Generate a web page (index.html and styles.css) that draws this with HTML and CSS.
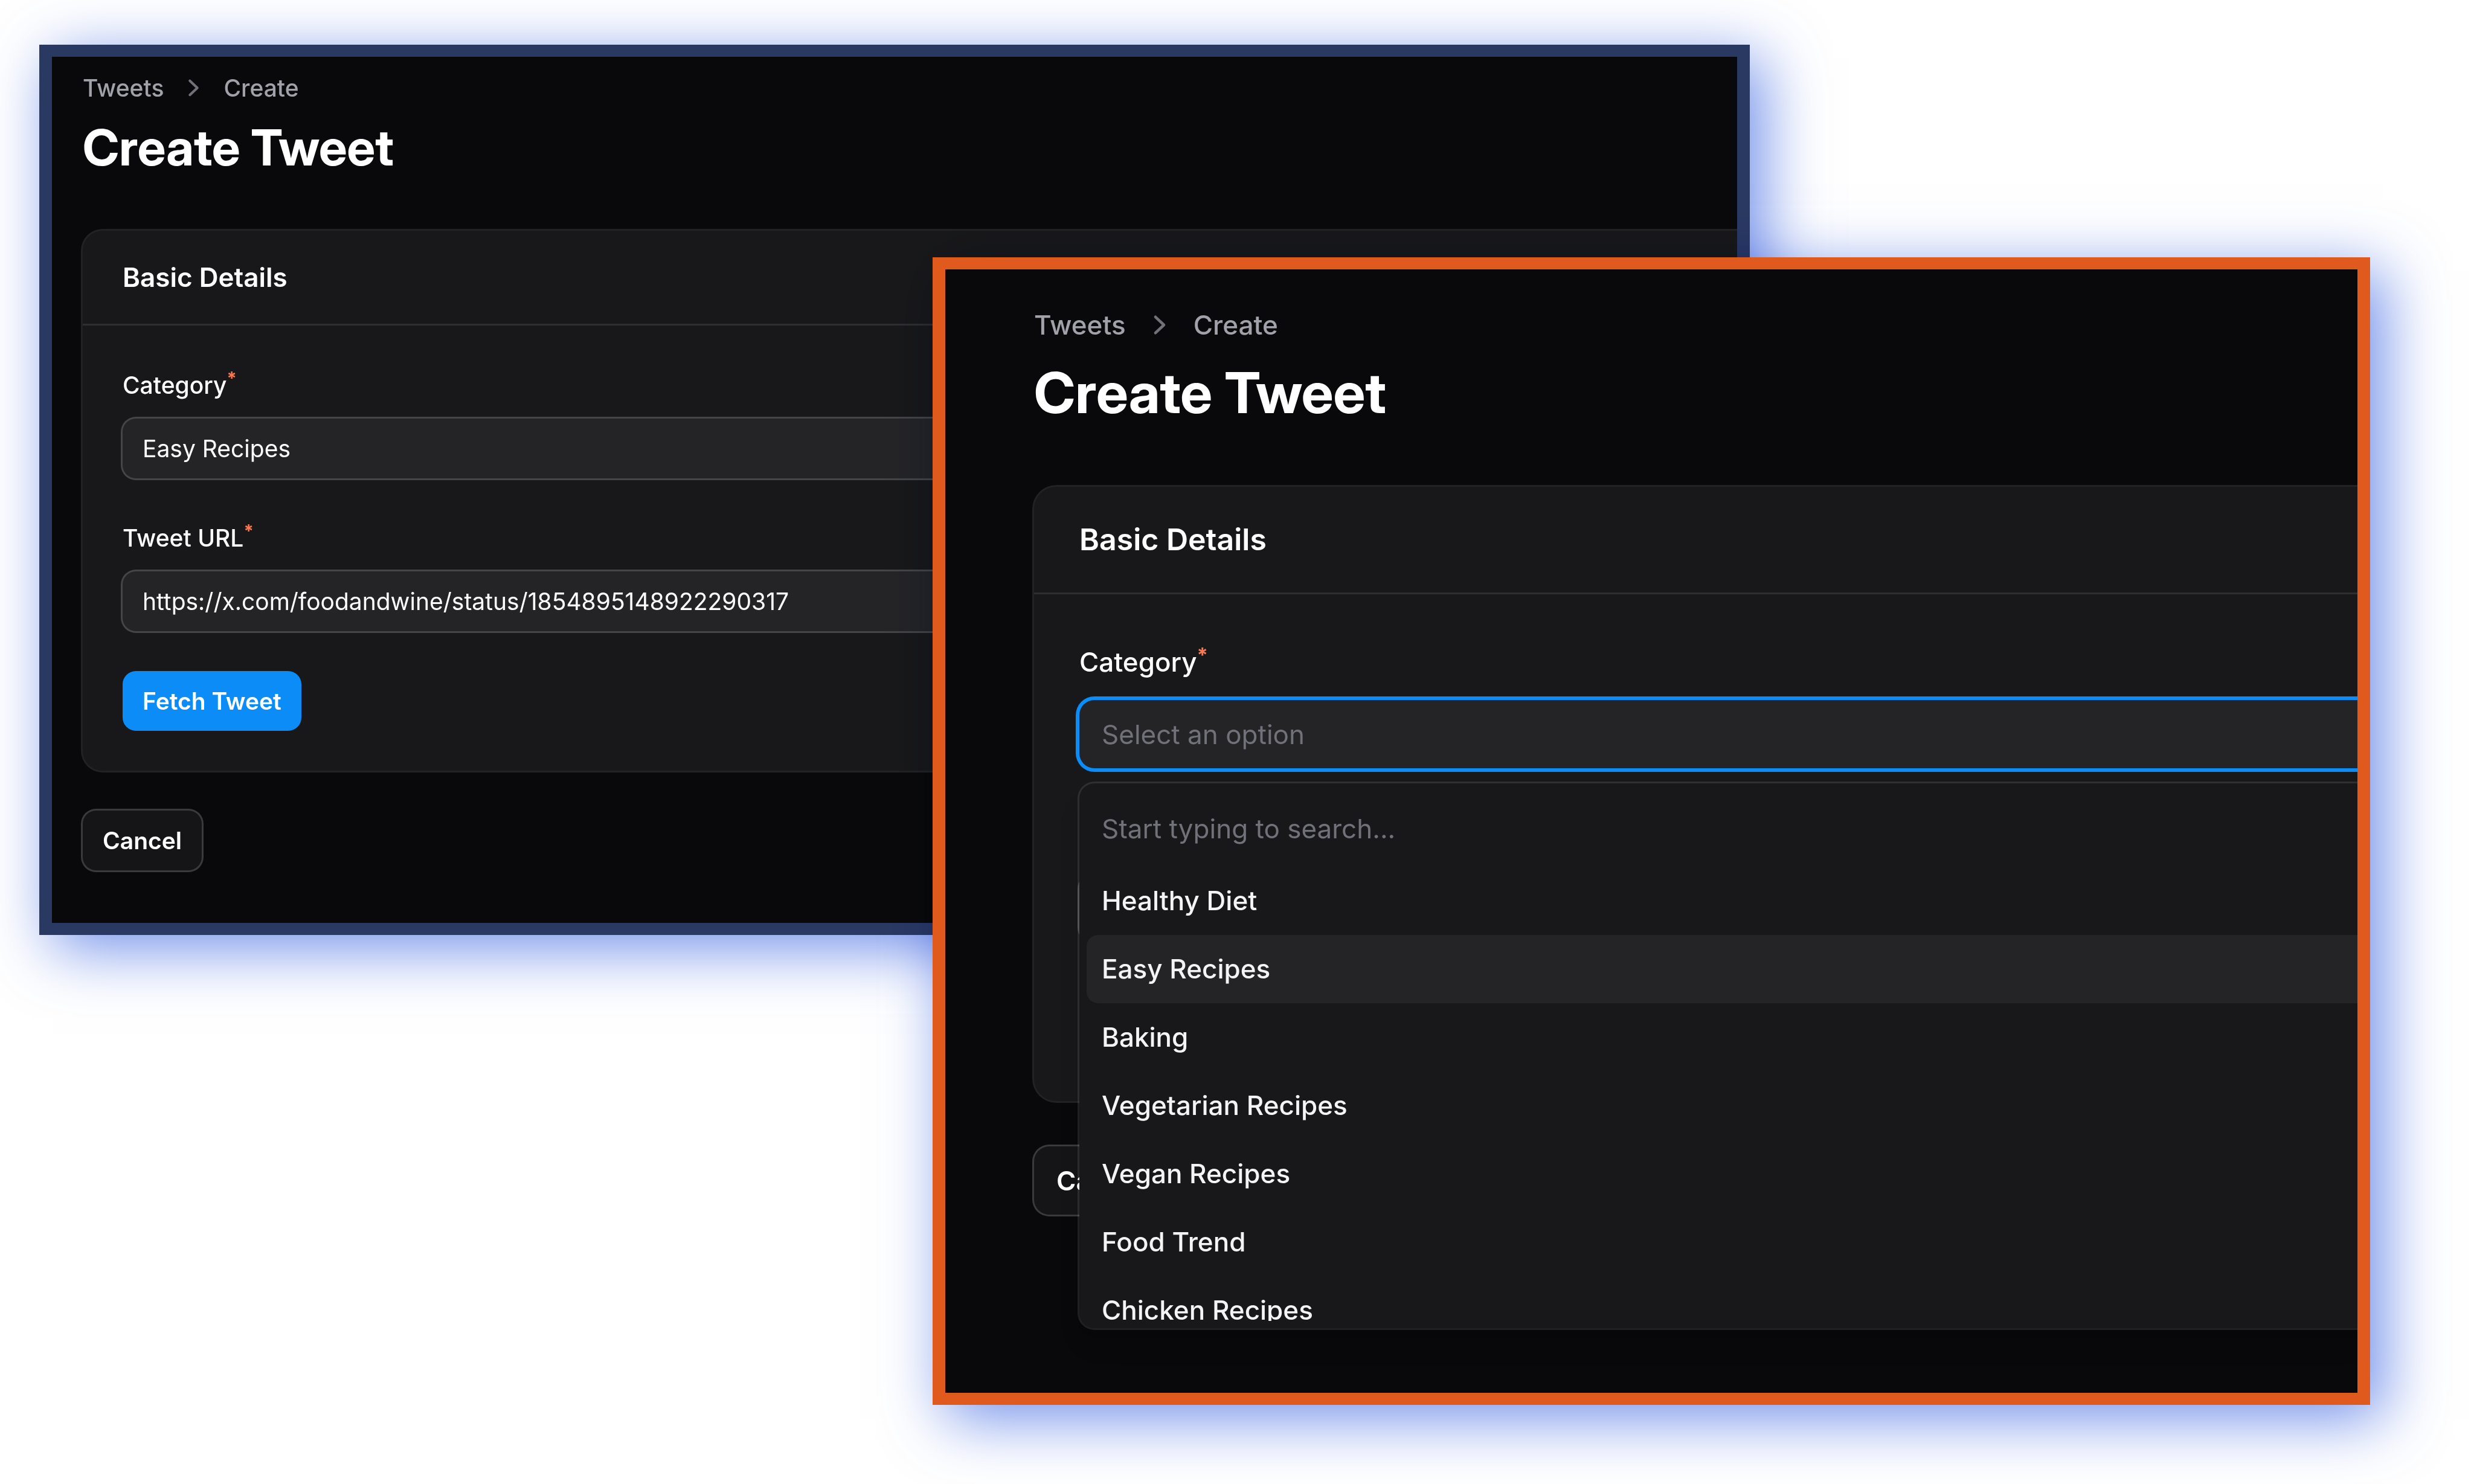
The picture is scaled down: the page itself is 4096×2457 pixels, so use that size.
FILE: index.html
```html
<!DOCTYPE html>
<html lang="en">
<head>
<meta charset="utf-8">
<title>Create Tweet</title>
<link rel="stylesheet" href="styles.css">
</head>
<body>
<main class="stage">

  <section class="window window--navy">
    <div class="frame">
      <div class="page">
        <nav class="crumbs" aria-label="Breadcrumb">
          <a href="#tweets">Tweets</a>
          <svg class="chevron" viewBox="0 0 20 20" aria-hidden="true"><path d="M7.21 14.77a.75.75 0 01.02-1.06L11.168 10 7.23 6.29a.75.75 0 111.04-1.08l4.5 4.25a.75.75 0 010 1.08l-4.5 4.25a.75.75 0 01-1.06-.02z"/></svg>
          <a href="#create">Create</a>
        </nav>
        <h1 class="title">Create Tweet</h1>
        <form class="form">
          <section class="card">
            <h2 class="card-title">Basic Details</h2>
            <div class="card-body">
              <div class="field">
                <label class="label" for="category">Category<sup class="required">*</sup></label>
                <select class="control" id="category"><option>Easy Recipes</option></select>
              </div>
              <div class="field">
                <label class="label" for="url">Tweet URL<sup class="required">*</sup></label>
                <input class="control" id="url" type="text" value="https://x.com/foodandwine/status/1854895148922290317">
              </div>
              <button class="button button--primary" type="button">Fetch Tweet</button>
            </div>
          </section>
          <button class="button button--plain" type="button">Cancel</button>
        </form>
      </div>
    </div>
  </section>

  <section class="window window--orange">
    <div class="frame">
      <div class="page">
        <nav class="crumbs" aria-label="Breadcrumb">
          <a href="#tweets">Tweets</a>
          <svg class="chevron" viewBox="0 0 20 20" aria-hidden="true"><path d="M7.21 14.77a.75.75 0 01.02-1.06L11.168 10 7.23 6.29a.75.75 0 111.04-1.08l4.5 4.25a.75.75 0 010 1.08l-4.5 4.25a.75.75 0 01-1.06-.02z"/></svg>
          <a href="#create">Create</a>
        </nav>
        <h1 class="title">Create Tweet</h1>
        <form class="form">
          <section class="card">
            <h2 class="card-title">Basic Details</h2>
            <div class="card-body">
              <div class="field">
                <label class="label" for="category-open">Category<sup class="required">*</sup></label>
                <select class="control control--open" id="category-open"><option>Select an option</option></select>
                <div class="dropdown">
                  <input class="search" type="text" placeholder="Start typing to search..." aria-label="Search categories">
                  <ul class="options" role="listbox" aria-label="Categories">
                    <li class="option" role="option">Healthy Diet</li>
                    <li class="option option--active" role="option" aria-selected="true">Easy Recipes</li>
                    <li class="option" role="option">Baking</li>
                    <li class="option" role="option">Vegetarian Recipes</li>
                    <li class="option" role="option">Vegan Recipes</li>
                    <li class="option" role="option">Food Trend</li>
                    <li class="option" role="option">Chicken Recipes</li>
                  </ul>
                </div>
              </div>
              <div class="field">
                <div class="label"></div>
                <input class="control" type="text" aria-label="Tweet URL">
              </div>
              <div class="action-space"></div>
            </div>
          </section>
          <button class="button button--plain" type="button">Cancel</button>
        </form>
      </div>
    </div>
  </section>

</main>
</body>
</html>
```
FILE: styles.css
```css
*, *::before, *::after { box-sizing: border-box; }

body {
  margin: 0;
  background: #fff;
  font-family: Inter, "Liberation Sans", sans-serif;
  color: #fff;
}

h1, h2, ul { margin: 0; padding: 0; }

.stage {
  position: relative;
  min-height: 100vh;
  overflow: hidden;
}

/* Two overlapping windows, each with its own size scale */
.window { position: absolute; }

.window--navy {
  --edge: #2a3962;
  --space-sm: 22px;
  --space-md: 33px;
  --space-lg: 66px;
  --head-pad: 44px;
  --text: 39px;
  --text-head: 44px;
  --text-title: 83px;
  --line: 55px;
  --line-head: 66px;
  --line-title: 99px;
  --section-gap: 88px;
  --control: 99px;
  --radius: 22px;
  --radius-card: 33px;
  --page-pad: 24px 0 87px 51px;
  left: 65px;
  right: 1199px;
  top: 74px;
}

.window--orange {
  --edge: #e05a1e;
  --space-sm: 25px;
  --space-md: 37px;
  --space-lg: 75px;
  --head-pad: 50px;
  --text: 44px;
  --text-head: 50px;
  --text-title: 94px;
  --line: 62px;
  --line-head: 75px;
  --line-title: 112px;
  --section-gap: 100px;
  --control: 113px;
  --radius: 25px;
  --radius-card: 37px;
  --page-pad: 61px 0 295px 147px;
  left: 1544px;
  right: 172px;
  top: 426px;
}

/* The glow multiplies with whatever lies below the window */
.window::before {
  content: "";
  position: absolute;
  inset: 0;
  box-shadow: 22px 22px 96px rgba(65, 105, 225, .75);
  mix-blend-mode: multiply;
}

.frame {
  position: relative;
  overflow: hidden;
  border: 20px solid var(--edge);
  border-left-width: 21px;
  border-right-width: 21px;
  background: #09090b;
}

.page {
  margin-right: -120px;
  padding: var(--page-pad);
  font-size: var(--text);
  line-height: var(--line);
}

.crumbs {
  display: flex;
  gap: var(--space-sm);
  font-weight: 500;
}

.crumbs a { color: #a1a1aa; text-decoration: none; }

.chevron {
  width: var(--line);
  height: var(--line);
  fill: #71717a;
}

.title {
  margin-top: var(--space-sm);
  font-family: "Inter Display", Inter, "Liberation Sans", sans-serif;
  font-size: var(--text-title);
  line-height: var(--line-title);
  font-weight: 700;
}

.form {
  display: flex;
  flex-direction: column;
  align-items: flex-start;
  gap: var(--space-lg);
  margin-top: var(--section-gap);
}

.card {
  align-self: stretch;
  border-radius: var(--radius-card);
  background: #18181a;
  box-shadow: 0 0 0 3px rgba(255, 255, 255, .1);
}

.card-title {
  padding: var(--head-pad) var(--space-lg);
  font-size: var(--text-head);
  line-height: var(--line-head);
  font-weight: 600;
}

.card-body {
  display: flex;
  flex-direction: column;
  align-items: flex-start;
  gap: var(--space-lg);
  padding: var(--space-lg);
  border-top: 3px solid rgba(255, 255, 255, .1);
}

.field {
  position: relative;
  display: flex;
  flex-direction: column;
  align-self: stretch;
  gap: var(--space-sm);
}

.label {
  height: var(--line-head);
  line-height: var(--line-head);
  font-weight: 500;
}

.required {
  position: relative;
  top: -.5em;
  vertical-align: baseline;
  font-size: 75%;
  font-weight: 700;
  line-height: 0;
  color: #f8794f;
}

.control {
  appearance: none;
  width: 100%;
  height: var(--control);
  padding: 0 var(--space-md);
  border: 0;
  border-radius: var(--radius);
  outline: 0;
  background: #242426;
  box-shadow: 0 0 0 3px #454547;
  color: #fff;
  font: inherit;
}

.control--open {
  box-shadow: 0 0 0 6px #0b8cf6;
  color: #71717a;
}

.button {
  height: var(--control);
  padding: 0 var(--space-md);
  border: 0;
  border-radius: var(--radius);
  color: #fff;
  font: inherit;
  font-weight: 600;
}

.button--primary { background: #0b8cf6; }

.button--plain {
  background: #151517;
  box-shadow: 0 0 0 3px #3a3a3c;
}

.action-space { height: var(--control); }

.dropdown {
  position: absolute;
  z-index: 1;
  top: 100%;
  left: 0;
  right: 0;
  margin-top: var(--space-sm);
  padding: 12px;
  border-radius: var(--radius);
  background: #18181a;
  box-shadow: 0 0 0 3px rgba(255, 255, 255, .1), 0 31px 47px -9px rgba(0, 0, 0, .1), 0 12px 19px -12px rgba(0, 0, 0, .1);
}

.search {
  display: block;
  width: 100%;
  height: 126px;
  padding: 0 var(--space-sm);
  border: 0;
  outline: 0;
  background: none;
  color: #fff;
  font: inherit;
}

.search::placeholder { color: #71717a; opacity: 1; }

.options {
  height: 752px;
  overflow: hidden;
  list-style: none;
}

.option {
  height: var(--control);
  padding: 0 var(--space-sm);
  border-radius: 19px;
  line-height: var(--control);
  font-weight: 500;
  color: #f4f4f5;
}

.option--active { background: #242426; }
```
